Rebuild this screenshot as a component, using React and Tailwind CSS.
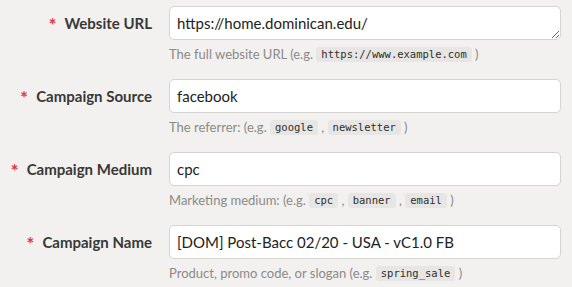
const fields = [
  {
    label: 'Website URL',
    value: 'https://home.dominican.edu/',
    textarea: true,
    help: ['The full website URL (e.g. ', { code: 'https://www.example.com' }, ' )'],
  },
  {
    label: 'Campaign Source',
    value: 'facebook',
    help: ['The referrer: (e.g. ', { code: 'google' }, ' , ', { code: 'newsletter' }, ' )'],
  },
  {
    label: 'Campaign Medium',
    value: 'cpc',
    help: ['Marketing medium: (e.g. ', { code: 'cpc' }, ' , ', { code: 'banner' }, ' , ', { code: 'email' }, ' )'],
  },
  {
    label: 'Campaign Name',
    value: '[DOM] Post-Bacc 02/20 - USA - vC1.0 FB',
    help: ['Product, promo code, or slogan (e.g. ', { code: 'spring_sale' }, ' )'],
  },
]

function Help({ parts }) {
  return (
    <p className="mt-[5px] text-[13px] leading-[18px] text-[#8b8a88] whitespace-pre">
      {parts.map((p, i) =>
        typeof p === 'string' ? (
          <span key={i}>{p}</span>
        ) : (
          <code
            key={i}
            className="inline-block rounded-[3px] bg-[#e7e6e4] px-[5px] text-[10.5px] leading-[15px] align-[1px] text-[#2e2e2e] font-['DejaVu_Sans_Mono',monospace]"
          >
            {p.code}
          </code>
        )
      )}
    </p>
  )
}

export default function App() {
  return (
    <div className="h-[287px] w-[572px] overflow-hidden bg-[#f2f1ef] pt-[6px] font-['Lato',sans-serif]">
      <div className="grid grid-cols-[152px_392px] gap-x-[17px]">
        {fields.map((f) => (
          <div key={f.label} className="contents">
            <div className="flex h-[34px] items-center justify-end gap-[8px] whitespace-nowrap text-[15px] font-bold text-[#383838]">
              <span className="mt-[2px] text-[19px] leading-none text-[#e0393e]">*</span>
              <span>{f.label}</span>
            </div>
            <div className="mb-[16px]">
              {f.textarea ? (
                <textarea
                  readOnly
                  rows={1}
                  value={f.value}
                  className="block h-[34px] w-full resize-y overflow-hidden rounded-[5px] border border-[#d6d4d0] bg-white px-[7px] py-[6px] text-[15px] leading-[20px] text-[#222] outline-none"
                />
              ) : (
                <input
                  readOnly
                  value={f.value}
                  className="block h-[34px] w-full rounded-[5px] border border-[#d6d4d0] bg-white px-[7px] text-[15px] text-[#222] outline-none"
                />
              )}
              <Help parts={f.help} />
            </div>
          </div>
        ))}
      </div>
    </div>
  )
}
